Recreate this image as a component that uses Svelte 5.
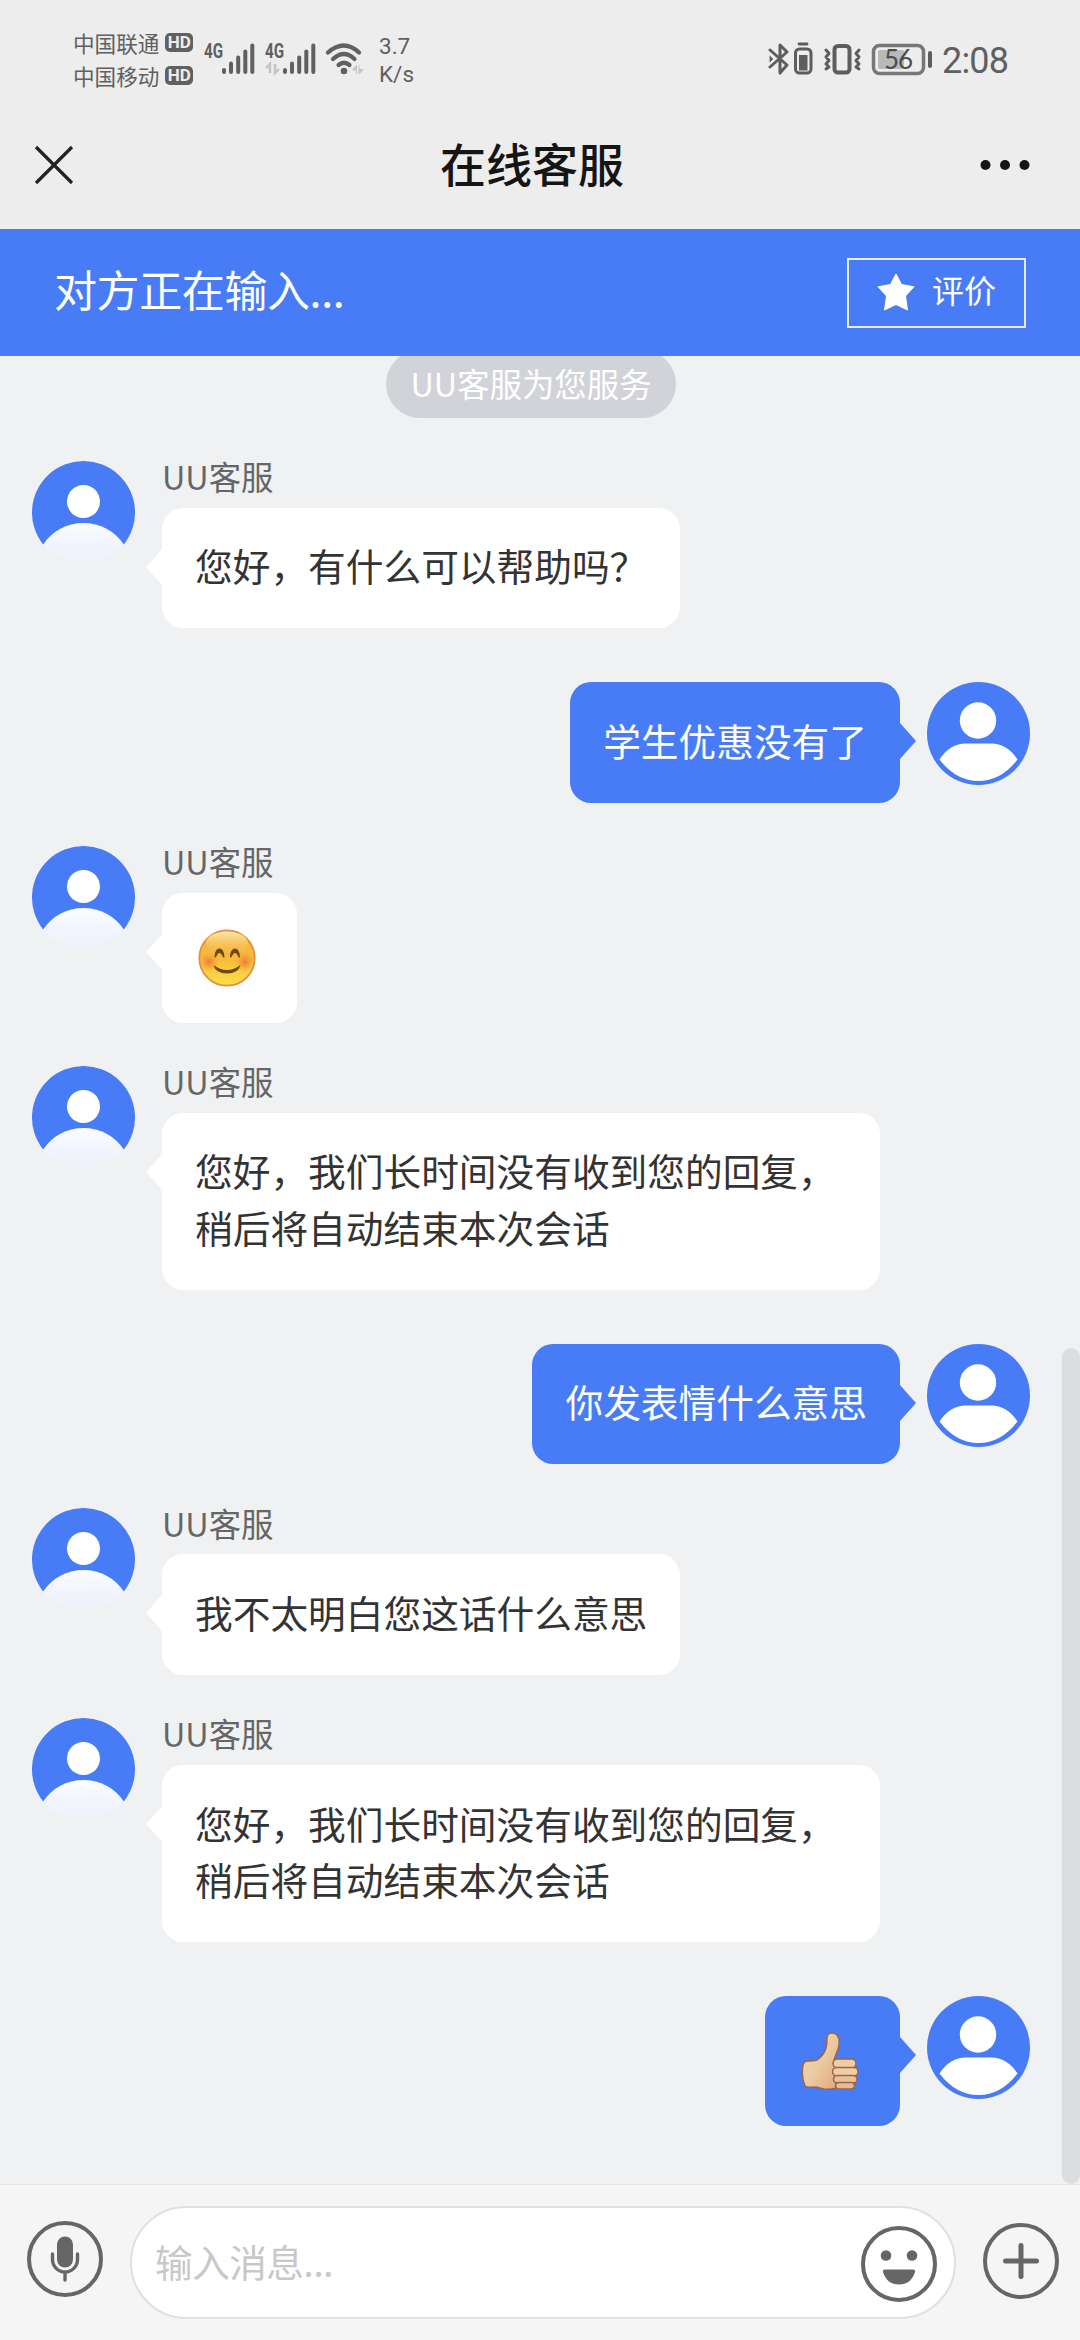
<script lang="ts">

	// One chat entry; a sticker is drawn instead of the text
	interface Message {
		from: "agent" | "me"
		lines?: string[]
		sticker?: "smile" | "thumb"
	}

	const agentName = "UU客服";

	const messages: Message[] = [
		{ from: "agent", lines: ["您好，有什么可以帮助吗？"] },
		{ from: "me", lines: ["学生优惠没有了"] },
		{ from: "agent", sticker: "smile" },
		{ from: "agent", lines: ["您好，我们长时间没有收到您的回复，", "稍后将自动结束本次会话"] },
		{ from: "me", lines: ["你发表情什么意思"] },
		{ from: "agent", lines: ["我不太明白您这话什么意思"] },
		{ from: "agent", lines: ["您好，我们长时间没有收到您的回复，", "稍后将自动结束本次会话"] },
		{ from: "me", sticker: "thumb" },
	];

	const carriers = ["中国联通", "中国移动"];

	// x of each signal bar and its top
	const bars = [[3, 25], [10, 18.5], [17.2, 12.5], [24.3, 6.5], [31.3, 0.5]];

	let draft = $state("");

</script>

<main>
	<div class="status">
		<div class="carriers">
			{#each carriers as name}
			<div class="carrier">{name}<span class="hd">HD</span></div>
			{/each}
		</div>

		{#each [false, true] as active}
		<div class="signal">
			<span class="net">4G</span>
			<svg width="52" height="34" viewBox="-17 -1 52 34">
				{#each bars as [x, top]}
				<path d="M{x} {top + 2}V29" stroke="#606060" stroke-width="4" stroke-linecap="round" />
				{/each}
				{#if active}
				<path d="M-12 30V21l-4 4M-7 21v9l4-4" fill="none" stroke="#c3c3c3" stroke-width="2.4" />
				{/if}
			</svg>
		</div>
		{/each}

		<svg class="wifi" width="40" height="34" viewBox="0 0 40 34">
			<g fill="none" stroke="#606060" stroke-width="4.2" stroke-linecap="round">
				<path d="M3 10.5Q19 -3.5 34 10.5" />
				<path d="M8 17Q19 7 29.500 17" />
				<path d="M13.500 23Q19 18.500 24.500 23" />
			</g>
			<circle cx="19" cy="29" r="3.300" fill="#606060" />
			<path d="M31.500 32V23.500l-4 4.500h4M34 23.500V32l4-4.500h-4" fill="#c3c3c3" stroke="#c3c3c3" />
		</svg>

		<div class="speed">3.7<br>K/s</div>

		<div class="right">
			<svg width="166" height="34" viewBox="0 0 166 34">
				<g fill="none" stroke="#5d5d5d" stroke-linejoin="round" stroke-linecap="round">
					<path d="M2 8L19 23l-7 8V3l7 7L2 25" stroke-width="3" />
					<path d="M2 14l3 3-3 3z" fill="#5d5d5d" stroke-width="0.500" />
					<rect x="27.500" y="7" width="15.500" height="24" rx="4" stroke-width="3" />
					<path d="M31 2h8" stroke-width="2.800" />
					<rect x="66.500" y="4" width="15" height="26.500" rx="3.500" stroke-width="4" />
					<path d="M58 8l3 3.500-3 3.500 3 3.500-3 3.500 3 3-3 2M91 8l-3 3.500 3 3.500-3 3.500 3 3.500-3 3 3 2" stroke-width="3" />
					<rect x="105.500" y="3.500" width="50" height="28" rx="6" stroke="#777" stroke-width="3.500" />
					<path d="M162 11v13" stroke-width="4" />
				</g>
				<rect x="31" y="13" width="8.500" height="15.500" fill="#5d5d5d" />
				<rect x="110" y="8" width="26" height="19" rx="2" fill="#b9b9b9" />
				<text x="130" y="27" text-anchor="middle" font-size="26" letter-spacing="-1" fill="#4d4d4d">56</text>
			</svg>
			<span class="clock">2:08</span>
		</div>
	</div>

	<header>
		<svg width="40" height="40" viewBox="0 0 40 40">
			<path d="M2 2L38 38M38 2L2 38" stroke="#222" stroke-width="3.200" />
		</svg>
		<h1>在线客服</h1>
		<svg class="more" width="50" height="12" viewBox="0 0 50 12">
			<circle cx="5.500" cy="6" r="5" fill="#151515" />
			<circle cx="25" cy="6" r="5" fill="#151515" />
			<circle cx="44.500" cy="6" r="5" fill="#151515" />
		</svg>
	</header>

	<div class="banner">
		<span class="typing">对方正在输入...</span>
		<button class="rate">
			<svg width="39" height="39" viewBox="0 0 39 39">
				<path d="M20 1l5.500 10.500L38 13.800l-8.500 9.200L31.500 37 20 31.500 8.500 37l2-14L2 13.800l12.500-2.300z" fill="#fff" stroke="#fff" stroke-linejoin="round" />
			</svg>
			<span>评价</span>
		</button>
	</div>

	<section class="chat">
		<div class="notice">UU客服为您服务</div>

		{#each messages as msg}
		<div class="row {msg.from}">
			{#if msg.from === "agent"}
			<svg class="avatar" viewBox="0 0 103 103">
				<defs>
					<linearGradient id="body" x1="0" y1="0" x2="0" y2="1">
						<stop offset="0" stop-color="#fbfcff" />
						<stop offset="0.500" stop-color="#f2f5ff" />
						<stop offset="1" stop-color="#eef1f6" />
					</linearGradient>
				</defs>
				<path d="M11.150 83.500A51.500 51.500 0 1 1 91.850 83.500z" fill="#487cf6" />
				<circle cx="51.500" cy="40.500" r="16.500" fill="#fff" />
				<path d="M11.150 83.500C20 70 35 62 51.500 62S83 70 91.850 83.500A51.500 51.500 0 0 1 11.150 83.500z" fill="url(#body)" />
			</svg>
			{/if}

			<div class="content">
				{#if msg.from === "agent"}
				<div class="name">{agentName}</div>
				{/if}
				<div class="bubble" class:wide={msg.lines && msg.lines.length > 1}>
					{#if msg.sticker === "smile"}
					<svg class="sticker" viewBox="0 0 58 58">
						<defs>
							<linearGradient id="skin" x1="0" y1="0" x2="0" y2="1">
								<stop offset="0" stop-color="#f2b04a" />
								<stop offset="0.500" stop-color="#f8b93b" />
								<stop offset="1" stop-color="#fce14b" />
							</linearGradient>
							<linearGradient id="shine" x1="0" y1="0" x2="0" y2="1">
								<stop offset="0" stop-color="#fdeab0" />
								<stop offset="1" stop-color="#f9c44a" stop-opacity="0" />
							</linearGradient>
							<radialGradient id="blush">
								<stop offset="0" stop-color="#ee7c35" />
								<stop offset="1" stop-color="#f59a35" stop-opacity="0" />
							</radialGradient>
						</defs>
						<circle cx="29" cy="29" r="27.700" fill="url(#skin)" stroke="#e0903e" stroke-width="1.800" />
						<ellipse cx="29" cy="14" rx="21" ry="11.500" fill="url(#shine)" />
						<circle cx="11" cy="33" r="10" fill="url(#blush)" />
						<circle cx="47" cy="33" r="10" fill="url(#blush)" />
						<g fill="#6e4c10">
							<path d="M16.500 28.500C16.500 16.500 26.500 16.500 26.500 28.500 24.500 29.500 24 24 21.500 24S18.500 29.500 16.500 28.500z" />
							<path d="M32 28.500C32 16.500 42 16.500 42 28.500 40 29.500 39.500 24 37 24S34 29.500 32 28.500z" />
							<path d="M15.500 36Q29 46 42.500 36 40.500 44.500 29 44.500T15.500 36z" />
						</g>
					</svg>
					{:else if msg.sticker === "thumb"}
					<svg class="sticker" viewBox="0 0 58 58">
						<defs>
							<linearGradient id="hand" x1="0" y1="0" x2="1" y2="1">
								<stop offset="0" stop-color="#f6d9b0" />
								<stop offset="0.500" stop-color="#eccba2" />
								<stop offset="1" stop-color="#e0a679" />
							</linearGradient>
						</defs>
						<g stroke="#966748" stroke-width="1.500" stroke-linejoin="round">
							<path d="M2 33q1-4 5-4 6 0 9-1 7-5 9-12 1-4 1-10 0-5 5-5 5 0 7 6 1 7-2 13l-3 8q7 8 5 27-5 3-15 2-5-1-8-2-8 1-11-1-4-9-2-21z" fill="url(#hand)" />
							<rect x="32" y="27" width="23" height="9" rx="4.500" fill="#efcda5" />
							<rect x="31.500" y="35.500" width="25.500" height="8.500" rx="4.200" fill="#efcda5" />
							<rect x="32.500" y="43.500" width="23.500" height="7.500" rx="3.700" fill="#ebc097" />
							<rect x="34.500" y="50.500" width="19" height="6.500" rx="3.200" fill="#f1b795" />
						</g>
					</svg>
					{:else if msg.lines}
						{#each msg.lines as line}
						<div class="line">{line}</div>
						{/each}
					{/if}
				</div>
			</div>

			{#if msg.from === "me"}
			<svg class="avatar" viewBox="0 0 103 103">
				<circle cx="51.500" cy="51.500" r="51.500" fill="#487cf6" />
				<circle cx="51" cy="38.500" r="18.200" fill="#fff" />
				<path d="M12.500 77.500Q23 61.500 39 61.500H64Q80 61.500 90.500 77.500 74 99 51.500 99T12.500 77.500z" fill="#fff" />
			</svg>
			{/if}
		</div>
		{/each}

		<div class="scrollbar"></div>
	</section>

	<footer>
		<svg class="icon mic" viewBox="0 0 76 76">
			<circle cx="38" cy="38" r="36" />
			<rect x="30" y="15.500" width="16" height="31" rx="8" fill="#666" stroke="none" />
			<path d="M25.500 33v5.500a12.500 12.500 0 0 0 25 0V33M38 51v8" stroke-width="3.400" />
		</svg>

		<div class="field">
			<input type="text" placeholder="输入消息..." bind:value={draft}>
			<svg class="icon" viewBox="0 0 76 76">
				<circle cx="38" cy="38" r="36" />
				<circle cx="25" cy="29.500" r="5.300" fill="#666" stroke="none" />
				<circle cx="51" cy="29.500" r="5.300" fill="#666" stroke="none" />
				<path d="M24 43.500H52q2.500 0 2 2.500-4 12.500-16 12.500T22 46q-.5-2.500 2-2.500z" fill="#666" stroke="none" />
			</svg>
		</div>

		<svg class="icon plus" viewBox="0 0 76 76">
			<circle cx="38" cy="38" r="36" />
			<path d="M38 22.500v31M22.500 38h31" stroke-width="5" />
		</svg>
	</footer>
</main>

<style>
	:global(body) {
		background: #eff1f3;
	}

	main {
		display: flex;
		flex-direction: column;
		width: 1080px;
		height: 2340px;
		overflow: hidden;
		font-family: "Noto Sans CJK SC", sans-serif;
	}

	svg {
		display: block;
		flex: none;
	}

	/* Phone status bar */
	.status {
		display: flex;
		box-sizing: border-box;
		height: 110px;
		padding: 27px 71px 0 73px;
		background: #ededed;
		color: #606060;
	}

	.carriers {
		width: 131px;
		margin-top: -1px;
	}

	.carrier {
		display: flex;
		align-items: center;
		gap: 6px;
		height: 33px;
		font-size: 21.6px;
		line-height: 30px;
		white-space: nowrap;
	}

	.hd {
		width: 28px;
		height: 19px;
		border-radius: 5px;
		background: #606060;
		color: #ededed;
		font: bold 17px/19px Roboto, sans-serif;
		text-align: center;
	}

	.signal {
		position: relative;
		width: 61px;
		padding-top: 15px;
	}

	.net {
		position: absolute;
		top: 14px;
		left: 0;
		font: bold 20px/20px Roboto, sans-serif;
		transform: scaleX(0.76);
		transform-origin: 0 0;
	}

	.wifi {
		margin: 15px 0 0 -1px;
	}

	.speed {
		margin: 6px 0 0 14px;
		font: 22.5px/27.5px Roboto, sans-serif;
	}

	.right {
		display: flex;
		margin-left: auto;
		padding-top: 15px;
	}

	.right text {
		font-family: Lato, sans-serif;
	}

	.clock {
		margin: -4px 0 0 8px;
		width: 67px;
		font: 36px/46px Roboto, sans-serif;
		letter-spacing: -0.8px;
		white-space: nowrap;
	}

	/* Page title */
	header {
		display: grid;
		grid-template-columns: 1fr auto 1fr;
		align-items: center;
		box-sizing: border-box;
		height: 119px;
		padding: 0 50px 10px 34px;
		background: #ededed;
	}

	.more {
		justify-self: end;
	}

	h1 {
		margin: -6px 0 0;
		color: #151515;
		font-size: 46px;
		font-weight: 500;
		line-height: 60px;
	}

	.banner {
		display: flex;
		align-items: center;
		justify-content: space-between;
		height: 127px;
		padding: 0 54px;
		background: #487cf6;
		color: #fff;
	}

	.typing {
		padding-bottom: 10px;
		font-size: 43px;
		letter-spacing: -0.4px;
	}

	.rate {
		display: flex;
		align-items: center;
		gap: 17px;
		box-sizing: border-box;
		width: 179px;
		height: 70px;
		padding: 0 0 0 27px;
		border: 2px solid #e4ecfd;
		background: none;
		color: #fff;
		font-family: inherit;
		font-size: 32px;
	}

	.rate span {
		padding-bottom: 7px;
	}

	/* Messages */
	.chat {
		position: relative;
		flex: 1;
		overflow: hidden;
		background: #eff1f3;
	}

	.notice {
		box-sizing: border-box;
		width: 290px;
		height: 68px;
		margin: -6px 0 43px 386px;
		border-radius: 34px;
		background: #d2d3d8;
		color: #fff;
		font-size: 32.4px;
		line-height: 65px;
		text-align: center;
	}

	.row {
		display: flex;
		margin-bottom: 43.4px;
		padding: 0 50px 0 32px;
	}

	.me {
		justify-content: flex-end;
		margin-top: 54px;
	}

	.avatar {
		width: 103px;
		height: 103px;
	}

	.agent .content {
		margin-left: 27px;
	}

	.me .content {
		margin-right: 27px;
	}

	.name {
		height: 46.7px;
		color: #666;
		font-size: 32.4px;
		line-height: 29px;
	}

	.bubble {
		position: relative;
		padding: 32px 33px;
		border-radius: 21px;
		background: #fff;
		color: #333;
		font-size: 37.7px;
		line-height: 56.5px;
		white-space: nowrap;
	}

	/* Lifts the glyphs to the optical middle of the bubble */
	.line {
		margin-top: -2.5px;
		padding-bottom: 2.5px;
	}

	.bubble.wide {
		box-sizing: border-box;
		width: 718px;
	}

	.me .bubble {
		background: #487cf6;
		color: #fff;
	}

	/* Pointer towards the avatar */
	.bubble::before {
		content: "";
		position: absolute;
		top: 41px;
		left: -16px;
		border: 18px solid transparent;
		border-right: 16px solid #fff;
		border-left: 0;
	}

	.me .bubble::before {
		right: -16px;
		left: auto;
		border-right: 0;
		border-left: 16px solid #487cf6;
	}

	.sticker {
		width: 58px;
		height: 58px;
		margin: 4px 8px 4px 3px;
	}

	.scrollbar {
		position: absolute;
		right: 0;
		bottom: 0;
		width: 18px;
		height: 836px;
		border-radius: 9px;
		background: #dcdddf;
	}

	/* Composer */
	footer {
		display: flex;
		box-sizing: border-box;
		height: 156px;
		padding: 21px 0 0 27px;
		border-top: 1px solid #e6e6e6;
		background: #f5f5f5;
	}

	.icon {
		width: 76px;
		height: 76px;
		fill: none;
		stroke: #666;
		stroke-width: 4;
		stroke-linecap: round;
	}

	.mic {
		margin-top: 15px;
	}

	.plus {
		margin: 17px 0 0 26.5px;
	}

	.field {
		display: flex;
		align-items: center;
		box-sizing: border-box;
		width: 826px;
		height: 113px;
		margin-left: 27px;
		padding: 2px 17px 0 23px;
		border: 2px solid #e0e0e0;
		border-radius: 57px;
		background: #fff;
	}

	input {
		flex: 1;
		min-width: 0;
		padding: 0 0 7px;
		border: 0;
		outline: 0;
		background: none;
		font-family: inherit;
		font-size: 37.7px;
		letter-spacing: -0.6px;
	}

	input::placeholder {
		color: #c8c8c8;
	}
</style>
